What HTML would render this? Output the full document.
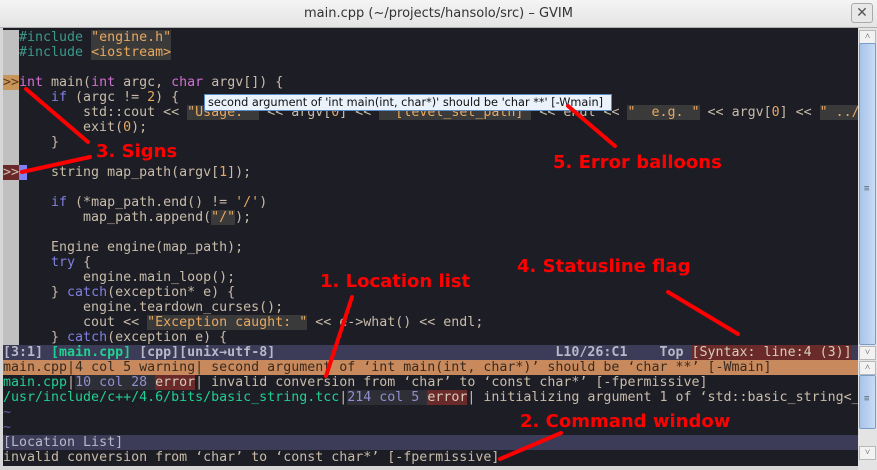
<!DOCTYPE html>
<html><head><meta charset="utf-8"><style>
*{margin:0;padding:0;box-sizing:border-box}
body{width:877px;height:470px;overflow:hidden;background:#d6d6d6;position:relative;font-family:"DejaVu Sans Mono",monospace}
#title{position:absolute;left:0;top:0;width:877px;height:28px;background:linear-gradient(#f4f4f4,#e4e4e4);border-bottom:1px solid #b0b0b0;font:13px "DejaVu Sans",sans-serif;color:#333;text-align:center;line-height:28px}
#close{position:absolute;right:4px;top:3px;width:22px;height:20px;border:1px solid #aaa;border-radius:3px;background:#e8e8e8;color:#555;font:bold 14px "DejaVu Sans";line-height:18px;text-align:center}
#ed{position:absolute;left:3px;top:28px;width:855px;height:438px;background:#1d1d26;overflow:hidden}
.l{position:absolute;left:0;height:15px;width:855px;white-space:pre;font-size:13.3px;line-height:15px;color:#c8bca8;overflow:hidden}
.g{display:inline-block;width:16px;background:#c0c0c0;color:#c0c0c0}
.pp{color:#3a9a8a}.s{background:#3a3a3a;color:#e8a860}.k{color:#d070d0}.b{color:#8080e0}.n{color:#e8a860}
.sw{background:#c88a5c;color:#3a2a20}
.c{color:#20d090}.lc{background:#2e2e36;color:#9090d0}.er{background:#6a2a2a;color:#d8ccb8}
#sb{position:absolute;left:858px;top:28px;width:19px;height:442px;background:#e4e4e4}
.btn{position:absolute;left:1px;width:17px;height:14px;background:#f2f2f2;border:1px solid #b8b8b8;font-size:9px;color:#333;text-align:center;line-height:12px}
.th{position:absolute;left:1px;width:17px;background:linear-gradient(90deg,#a8c4e8,#c8dcf4);border:1px solid #7a9cc8;border-radius:2px}
#tip{position:absolute;left:204px;top:94px;width:408px;height:17px;background:#eaf2fc;border:1px solid #5a8ac8;font:11.3px "DejaVu Sans",sans-serif;color:#111;line-height:15px;padding-left:3px;white-space:nowrap;overflow:hidden}
.a{position:absolute;color:#f00;font:bold 18px "DejaVu Sans",sans-serif;white-space:nowrap}
</style></head><body>
<div id="title">main.cpp (~/projects/hansolo/src) – GVIM<div id="close">✕</div></div>
<div id="ed">
<div class="l" style="top:2px"><span class="g">  </span><span class="pp">#include</span> <span class="s">"engine.h"</span></div>
<div class="l" style="top:17px"><span class="g">  </span><span class="pp">#include</span> <span class="s">&lt;iostream&gt;</span></div>
<div class="l" style="top:32px"><span class="g">  </span></div>
<div class="l" style="top:47px"><span class="g" style="background:#c8965a;color:#5a3a1a">&gt;&gt;</span><span class="k">int</span> main(<span class="k">int</span> argc, <span class="k">char</span> argv[]) {</div>
<div class="l" style="top:62px"><span class="g">  </span>    <span class="b">if</span> (argc != <span class="n">2</span>) {</div>
<div class="l" style="top:77px"><span class="g">  </span>        std::cout &lt;&lt; <span class="s">"Usage: "</span> &lt;&lt; argv[<span class="n">0</span>] &lt;&lt; <span class="s">" [level_set_path]"</span> &lt;&lt; endl &lt;&lt; <span class="s">"  e.g. "</span> &lt;&lt; argv[<span class="n">0</span>] &lt;&lt; <span class="s">" ../</span></div>
<div class="l" style="top:92px"><span class="g">  </span>        exit(<span class="n">0</span>);</div>
<div class="l" style="top:107px"><span class="g">  </span>    }</div>
<div class="l" style="top:122px"><span class="g">  </span></div>
<div class="l" style="top:137px"><span class="g" style="background:#6a2a2a;color:#d0c0b0">&gt;&gt;</span><span style="background:#8080f0"> </span>   string map_path(argv[<span class="n">1</span>]);</div>
<div class="l" style="top:152px"><span class="g">  </span></div>
<div class="l" style="top:167px"><span class="g">  </span>    <span class="b">if</span> (*map_path.end() != <span class="n">'/'</span>)</div>
<div class="l" style="top:182px"><span class="g">  </span>        map_path.append(<span class="s">"/"</span>);</div>
<div class="l" style="top:197px"><span class="g">  </span></div>
<div class="l" style="top:212px"><span class="g">  </span>    Engine engine(map_path);</div>
<div class="l" style="top:227px"><span class="g">  </span>    <span class="b">try</span> {</div>
<div class="l" style="top:242px"><span class="g">  </span>        engine.main_loop();</div>
<div class="l" style="top:257px"><span class="g">  </span>    } <span class="b">catch</span>(exception* e) {</div>
<div class="l" style="top:272px"><span class="g">  </span>        engine.teardown_curses();</div>
<div class="l" style="top:287px"><span class="g">  </span>        cout &lt;&lt; <span class="s">"Exception caught: "</span> &lt;&lt; e-&gt;what() &lt;&lt; endl;</div>
<div class="l" style="top:302px"><span class="g">  </span>    } <span class="b">catch</span>(exception e) {</div>
<div class="l" style="top:317px;background:#3c3c58;color:#b8b8c8;font-weight:bold">[3:1] <span style="color:#20d090">[main.cpp]</span> [cpp][unix→utf-8]                                   L10/26:C1    Top <span style="background:#6a2a2a;color:#d8ccb8;font-weight:normal">[Syntax: line:4 (3)]</span></div>
<div class="l sw" style="top:332px">main.cpp|4 col 5 warning| second argument of ‘int main(int, char*)’ should be ‘char **’ [-Wmain]</div>
<div class="l" style="top:347px"><span class="c">main.cpp</span>|<span class="lc">10 col 28 </span><span class="er">error</span>| invalid conversion from ‘char’ to ‘const char*’ [-fpermissive]</div>
<div class="l" style="top:362px"><span class="c">/usr/include/c++/4.6/bits/basic_string.tcc</span>|<span class="lc">214 col 5 </span><span class="er">error</span>| initializing argument 1 of ‘std::basic_string&lt;_</div>
<div class="l" style="top:377px;color:#6060a0">~</div>
<div class="l" style="top:392px;color:#6060a0">~</div>
<div class="l" style="top:407px;background:#3c3c58;color:#b8b8c8">[Location List]</div>
<div class="l" style="top:422px">invalid conversion from ‘char’ to ‘const char*’ [-fpermissive]</div>
</div>
<div id="sb">
<div class="btn" style="top:2px">˄</div>
<div class="th" style="top:15px;height:302px"><span style="position:absolute;top:140px;left:4px;font-size:9px;color:#567">≡</span></div>
<div class="btn" style="top:318px">˅</div>
<div class="btn" style="top:333px">˄</div>
<div class="th" style="top:347px;height:54px"><span style="position:absolute;top:18px;left:4px;font-size:9px;color:#567">≡</span></div>
<div class="btn" style="top:418px">˅</div>
</div>
<div id="tip">second argument of 'int main(int, char*)' should be 'char **' [-Wmain]</div>
<svg style="position:absolute;left:0;top:0" width="877" height="470">
<g stroke="#f00" stroke-width="4" stroke-linecap="round">
<line x1="26" y1="89" x2="88" y2="142"/>
<line x1="22" y1="172" x2="90" y2="157"/>
<line x1="568" y1="106" x2="615" y2="146"/>
<line x1="352" y1="297" x2="326" y2="376"/>
<line x1="668" y1="292" x2="738" y2="334"/>
<line x1="561" y1="433" x2="500" y2="459"/>
</g></svg>
<div class="a" style="left:96px;top:141px">3. Signs</div>
<div class="a" style="left:553px;top:152px">5. Error balloons</div>
<div class="a" style="left:320px;top:271px">1. Location list</div>
<div class="a" style="left:517px;top:256px">4. Statusline flag</div>
<div class="a" style="left:520px;top:411px">2. Command window</div>
</body></html>
